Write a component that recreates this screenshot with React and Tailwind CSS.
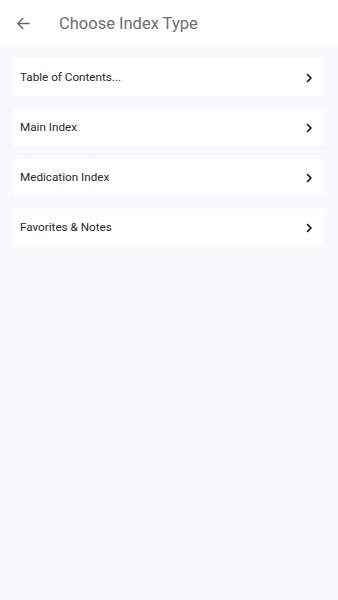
const items = ['Table of Contents...', 'Main Index', 'Medication Index', 'Favorites & Notes']

function Chevron() {
  return (
    <svg width="12" height="12" viewBox="0 0 24 24" fill="none" stroke="#111" strokeWidth="3.2" strokeLinecap="round" strokeLinejoin="round">
      <path d="M9 5l7 7-7 7" />
    </svg>
  )
}

export default function App() {
  return (
    <div className="flex flex-col h-[600px] bg-[#f9f9fb]" style={{ fontFamily: 'Roboto, "Noto Sans", sans-serif' }}>
      {/* Header */}
      <div className="flex items-center h-[46px] bg-white shrink-0">
        <button className="ml-[14px] w-[18px] h-[18px] flex items-center justify-center">
          <svg width="17" height="17" viewBox="0 0 24 24" fill="none" stroke="#666" strokeWidth="2" strokeLinecap="round" strokeLinejoin="round">
            <path d="M20 12H4" />
            <path d="M11 5l-7 7 7 7" />
          </svg>
        </button>
        <h1 className="ml-[27px] mt-[2px] text-[16.5px] font-normal text-[#6e6e6e]">Choose Index Type</h1>
      </div>

      {/* List */}
      <div className="flex flex-col gap-[13px] pl-[13px] pr-[14px] pt-[13px]">
        {items.map((label) => (
          <div key={label} className="flex items-center justify-between h-[37px] bg-white rounded-[3px] pl-[7px] pr-[9px]">
            <span className="text-[11.7px] text-[#2a2a2a]">{label}</span>
            <Chevron />
          </div>
        ))}
      </div>
    </div>
  )
}
